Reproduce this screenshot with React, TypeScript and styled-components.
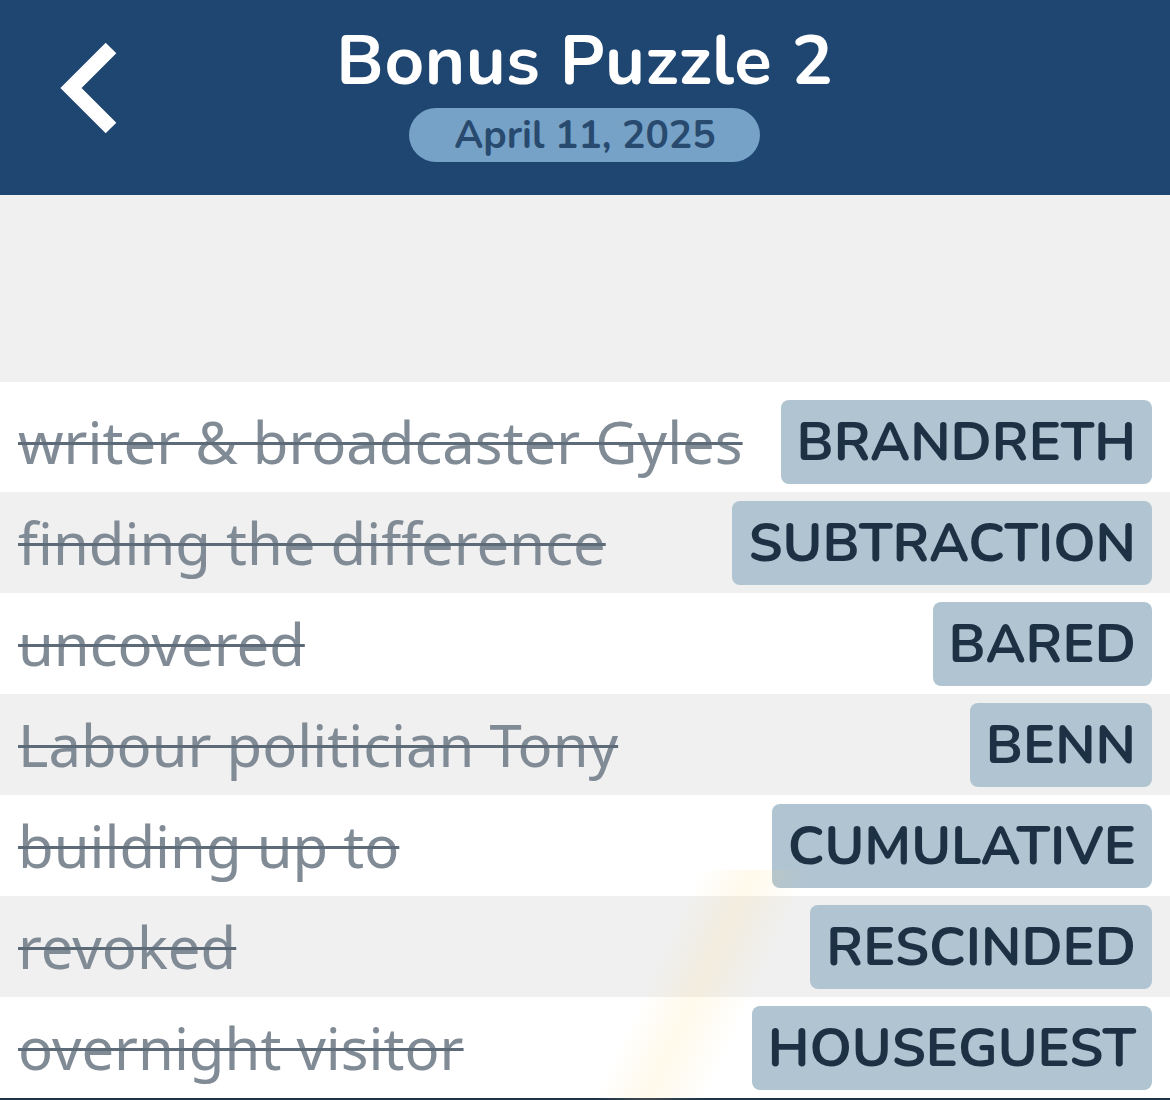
import React from 'react';
import styled, { createGlobalStyle } from 'styled-components';

interface Clue {
  id: number;
  clue: string;
  answer: string;
}

const clues: Clue[] = [
  { id: 1, clue: 'writer & broadcaster Gyles', answer: 'BRANDRETH' },
  { id: 2, clue: 'finding the difference', answer: 'SUBTRACTION' },
  { id: 3, clue: 'uncovered', answer: 'BARED' },
  { id: 4, clue: 'Labour politician Tony', answer: 'BENN' },
  { id: 5, clue: 'building up to', answer: 'CUMULATIVE' },
  { id: 6, clue: 'revoked', answer: 'RESCINDED' },
  { id: 7, clue: 'overnight visitor', answer: 'HOUSEGUEST' },
];

const GlobalStyle = createGlobalStyle`
  body {
    margin: 0;
    background: #ffffff;
    font-family: "Noto Sans", "Open Sans", sans-serif;
  }
`;

const Page = styled.div`
  width: 1170px;
  height: 1100px;
  overflow: hidden;
  position: relative;
  background: #ffffff;
`;

const Header = styled.header`
  height: 195px;
  background: #1f4670;
  display: grid;
  grid-template-columns: 1fr auto 1fr;
  align-items: start;
`;

const BackButton = styled.button`
  justify-self: start;
  margin: 42px 0 0 59px;
  width: 68px;
  height: 94px;
  padding: 0;
  border: none;
  background: none;
  cursor: pointer;
  display: block;
`;

const TitleBlock = styled.div`
  display: flex;
  flex-direction: column;
  align-items: center;
  padding-top: 23px;
`;

const Title = styled.h1`
  margin: 0;
  color: #ffffff;
  font-family: "Nunito", "Noto Sans", sans-serif;
  font-weight: 700;
  font-size: 69px;
  line-height: 76px;
  letter-spacing: 0.6px;
`;

const DatePill = styled.div`
  margin-top: 9px;
  width: 351px;
  height: 54px;
  border-radius: 27px;
  background: #77a2c7;
  color: #284a6f;
  font-family: "Nunito", "Noto Sans", sans-serif;
  font-weight: 700;
  font-size: 39px;
  display: flex;
  align-items: center;
  justify-content: center;
`;

const Spacer = styled.div`
  height: 187px;
  background: #f0f0f0;
`;

const List = styled.ul`
  list-style: none;
  margin: 0;
  padding: 9px 0 0;
  background: #ffffff;
`;

const Row = styled.li<{ $shaded: boolean }>`
  height: 101px;
  padding: 0 18px;
  display: flex;
  align-items: center;
  justify-content: space-between;
  background: ${p => (p.$shaded ? '#f0f0f0' : '#ffffff')};
`;

const ClueText = styled.span`
  color: #808b96;
  font-family: "Noto Sans", "Open Sans", sans-serif;
  font-size: 58px;
  white-space: nowrap;
  text-decoration: line-through;
  text-decoration-thickness: 3px;
  text-decoration-color: #5d6b79;
`;

const Answer = styled.span`
  height: 84px;
  padding: 0 16px;
  border-radius: 8px;
  background: #b1c4d2;
  color: #1d3145;
  font-family: "Nunito", "Noto Sans", sans-serif;
  font-weight: 700;
  font-size: 54px;
  display: flex;
  align-items: center;
  white-space: nowrap;
`;

const BottomEdge = styled.div`
  height: 4px;
  background: #1f3347;
`;

const Glare = styled.div`
  position: absolute;
  left: 590px;
  top: 870px;
  width: 220px;
  height: 230px;
  pointer-events: none;
  background: linear-gradient(100deg, rgba(255, 220, 120, 0) 30%, rgba(255, 214, 110, 0.14) 50%, rgba(255, 220, 120, 0) 72%);
  transform: skewX(-16deg);
`;

const Chevron = () => (
  <svg width="68" height="94" viewBox="0 0 68 94">
    <path d="M52 6 L12 46 L52 86" fill="none" stroke="#ffffff" strokeWidth="15" strokeLinejoin="miter" />
  </svg>
);

export default function App() {
  return (
    <Page>
      <GlobalStyle />
      <Header>
        <BackButton aria-label="Back">
          <Chevron />
        </BackButton>
        <TitleBlock>
          <Title>Bonus Puzzle 2</Title>
          <DatePill>April 11, 2025</DatePill>
        </TitleBlock>
        <div />
      </Header>
      <Spacer />
      <List>
        {clues.map((c, i) => (
          <Row key={c.id} $shaded={i % 2 === 1}>
            <ClueText>{c.clue}</ClueText>
            <Answer>{c.answer}</Answer>
          </Row>
        ))}
      </List>
      <BottomEdge />
      <Glare />
    </Page>
  );
}
